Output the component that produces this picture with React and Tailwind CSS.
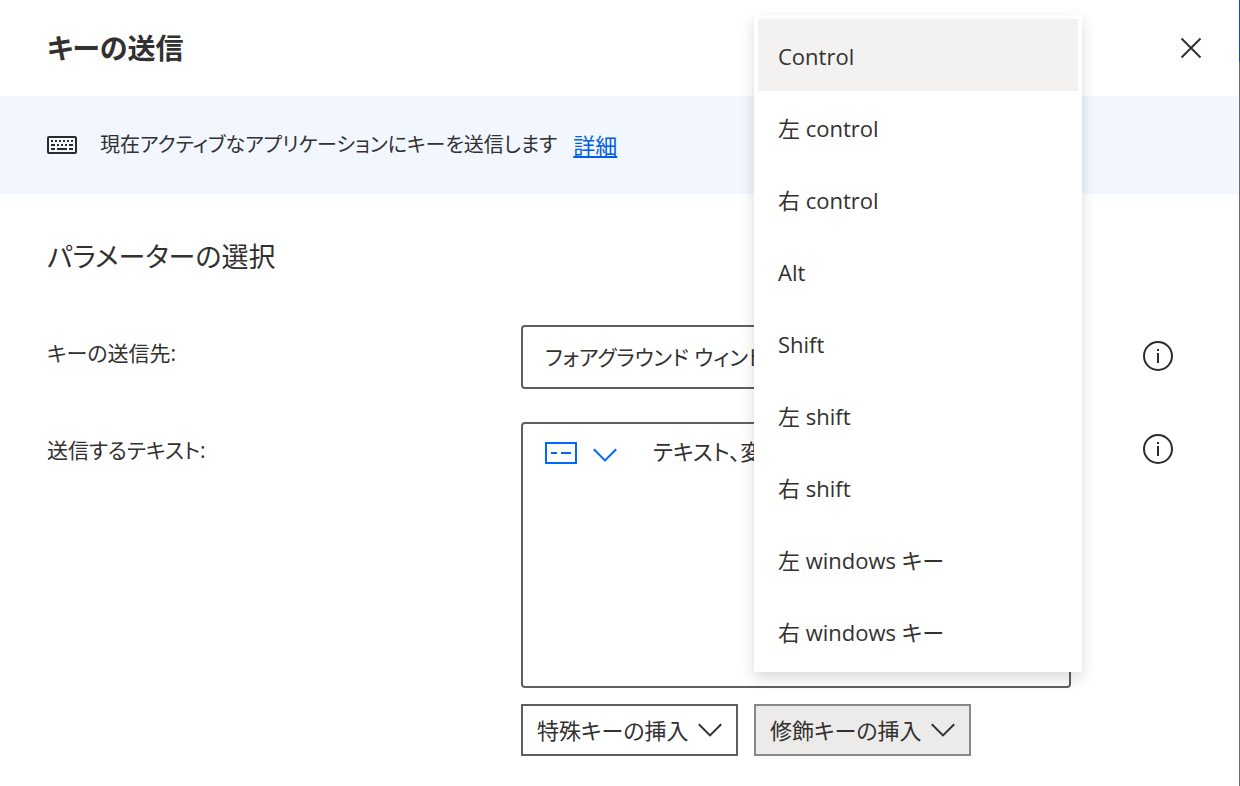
import { useState } from "react";

const modifierKeys = [
  "Control",
  "左 control",
  "右 control",
  "Alt",
  "Shift",
  "左 shift",
  "右 shift",
  "左 windows キー",
  "右 windows キー",
];

function Chevron({ className }) {
  return (
    <svg viewBox="0 0 24 14" className={"h-[14px] w-6 shrink-0 " + className} fill="none" stroke="currentColor" strokeWidth="2" aria-hidden="true">
      <path d="M0.8 1.2 12 12.4 23.2 1.2" />
    </svg>
  );
}

function KeyboardIcon() {
  return (
    <svg viewBox="0 0 30 18" className="h-[18px] w-[30px] shrink-0" fill="none" aria-hidden="true">
      <rect x="1" y="1" width="28" height="16" rx="1" stroke="#2b2b2b" strokeWidth="2" />
      <g fill="#2b2b2b">
        <path d="M4 4h2v2H4zM8 4h2v2H8zM12 4h2v2h-2zM16 4h2v2h-2zM20 4h2v2h-2zM24 4h2v2h-2z" />
        <path d="M4 8h4v2H4zM10 8h2v2h-2zM14 8h2v2h-2zM18 8h2v2h-2zM22 8h4v2h-4z" />
        <path d="M4 12h4v2H4zM10 12h10v2H10zM22 12h4v2h-4z" />
      </g>
    </svg>
  );
}

function InfoButton({ label, className }) {
  return (
    <button type="button" aria-label={label} className={"h-[30px] w-[30px] justify-self-end text-[#2b2b2b] " + className}>
      <svg viewBox="0 0 30 30" className="h-[30px] w-[30px]" fill="none" aria-hidden="true">
        <circle cx="15" cy="15" r="14" stroke="currentColor" strokeWidth="2" />
        <path d="M14 8h2v2h-2zM14 12h2v10h-2z" fill="currentColor" />
      </svg>
    </button>
  );
}

export default function App() {
  const [selected, setSelected] = useState("Control");
  const [text, setText] = useState("テキスト、変数、または式として入力します");

  return (
    <div className="flex min-h-screen bg-white font-['Open_Sans','Noto_Sans_CJK_JP',sans-serif] text-[22px] leading-8 text-[#323130] [font-feature-settings:'palt']">
      <main className="min-w-0 grow">
        <header className="flex h-24 items-center justify-between pr-[37px] pl-[47px]">
          <h1 className="text-[28px] leading-10 font-semibold">キーの送信</h1>
          <button type="button" aria-label="閉じる" className="h-[22px] w-[22px]">
            <svg viewBox="0 0 22 22" className="h-[22px] w-[22px]" fill="none" stroke="currentColor" strokeWidth="2" aria-hidden="true">
              <path d="M1.5 1.5 20.5 20.5M20.5 1.5 1.5 20.5" />
            </svg>
          </button>
        </header>

        <div className="flex h-[98px] items-center gap-[23px] bg-[#f1f6ff] px-[47px]">
          <KeyboardIcon />
          <p className="flex gap-4 text-[20px] whitespace-nowrap">
            <span>現在アクティブなアプリケーションにキーを送信します</span>
            <a href="#details" className="text-[22px] text-[#005fe5] underline underline-offset-2">詳細</a>
          </p>
        </div>

        <form className="pt-[43px] pr-[66px] pb-[30px] pl-[47px]" onSubmit={(e) => e.preventDefault()}>
          <h2 className="text-[27px] leading-10">パラメーターの選択</h2>
          <div className="mt-12 grid grid-cols-[474px_minmax(0,1fr)_102px] items-start gap-y-[33px]">
            <label htmlFor="target" className="pt-3 text-[21px]">キーの送信先:</label>
            <select id="target" className="h-16 w-full appearance-none rounded border-2 border-[#5f5f5f] bg-white px-[22px] text-[21px]">
              <option>フォアグラウンド ウィンドウ</option>
            </select>
            <InfoButton label="キーの送信先の情報" className="mt-4" />

            <label htmlFor="text" className="pt-3 text-[21px]">送信するテキスト:</label>
            <div>
              <div className="flex h-[266px] items-start rounded border-2 border-[#5f5f5f] bg-white pt-[11px] pl-[22px]">
                <button type="button" aria-label="入力の種類" className="flex h-9 items-center gap-4 text-[#0066ff]">
                  <svg viewBox="0 0 32 22" className="h-[22px] w-8" fill="none" stroke="currentColor" strokeWidth="2" aria-hidden="true">
                    <rect x="1" y="1" width="30" height="20" />
                    <path d="M6 11h6M16 11h10" />
                  </svg>
                  <Chevron className="mt-1" />
                </button>
                <textarea
                  id="text"
                  value={text}
                  onChange={(e) => setText(e.target.value)}
                  className="ml-9 h-full min-w-0 grow resize-none bg-transparent outline-none"
                />
              </div>
              <div className="mt-4 flex gap-4">
                <button type="button" className="flex h-[52px] w-[217px] items-center justify-between border-2 border-[#5f5f5f] bg-white px-[14px] whitespace-nowrap">
                  特殊キーの挿入
                  <Chevron className="" />
                </button>
                <div className="relative">
                  <button type="button" aria-haspopup="menu" aria-expanded="true" className="flex h-[52px] w-[217px] items-center justify-between border-2 border-[#8a8886] bg-[#edebe9] px-[14px] whitespace-nowrap">
                    修飾キーの挿入
                    <Chevron className="" />
                  </button>
                  <div role="menu" className="absolute bottom-full left-0 mb-8 w-[328px] bg-white px-1 pt-1 pb-[5px] shadow-[0_6px_14px_rgba(0,0,0,0.15)]">
                    {modifierKeys.map((key) => (
                      <button
                        key={key}
                        type="button"
                        role="menuitem"
                        onClick={() => setSelected(key)}
                        className={"flex h-[72px] w-full items-center px-5 pt-[2px] " + (key === selected ? "bg-[#f3f2f1]" : "bg-white")}
                      >
                        <span className="whitespace-pre">{key}</span>
                      </button>
                    ))}
                  </div>
                </div>
              </div>
            </div>
            <InfoButton label="送信するテキストの情報" className="mt-3" />
          </div>
        </form>
      </main>
      <div className="flex w-px shrink-0 flex-col">
        <div className="h-[62px] bg-[#0a50b4]" />
        <div className="grow bg-[#6f6f6f]" />
      </div>
    </div>
  );
}
